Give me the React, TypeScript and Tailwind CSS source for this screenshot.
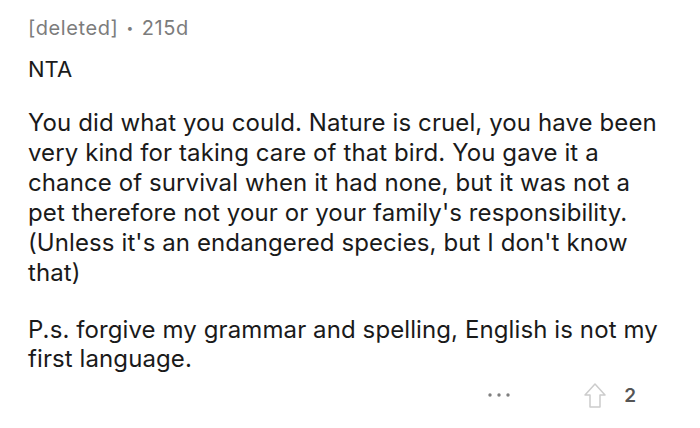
import React from "react";

export default function App() {
  return (
    <div
      className="w-[700px] h-[428px] bg-white text-[#1a1a1a] pl-[28px] pr-[10px] pt-[16px] overflow-hidden"
      style={{ fontFamily: "Inter, 'Noto Sans', sans-serif" }}
    >
      <div className="flex items-center text-[20px] leading-[24px] tracking-[0.6px] text-[#7c7c7c]">
        <span>[deleted]</span>
        <span className="mx-[8px] text-[12px]">•</span>
        <span>215d</span>
      </div>
      <div className="mt-[15px] text-[22px] leading-[28px]">NTA</div>
      <div className="mt-[25px] text-[24px] leading-[30px] tracking-[0.1px] whitespace-nowrap">
        You did what you could. Nature is cruel, you have been
        <br />
        very kind for taking care of that bird. You gave it a
        <br />
        chance of survival when it had none, but it was not a
        <br />
        pet therefore not your or your family's responsibility.
        <br />
        (Unless it's an endangered species, but I don't know
        <br />
        that)
      </div>
      <div className="mt-[27px] text-[24px] leading-[29px] tracking-[0.1px] whitespace-nowrap">
        P.s. forgive my grammar and spelling, English is not my
        <br />
        first language.
      </div>
      <div className="mt-[8px] h-[28px] flex items-center justify-end pr-[54px]">
        <svg width="22" height="4" viewBox="0 0 22 4">
          <circle cx="2" cy="2" r="1.7" fill="#7f7f7f" />
          <circle cx="11" cy="2" r="1.7" fill="#7f7f7f" />
          <circle cx="20" cy="2" r="1.7" fill="#7f7f7f" />
        </svg>
        <svg className="ml-[74px]" width="22" height="25" viewBox="0 0 22 25" fill="none">
          <path d="M11 1 L21 12 L16 12 L16 24 L6 24 L6 12 L1 12 Z" stroke="#cccccc" strokeWidth="1.5" strokeLinejoin="round" />
        </svg>
        <span className="ml-[18px] text-[19px] leading-none text-[#555555] font-semibold">2</span>
      </div>
    </div>
  );
}
